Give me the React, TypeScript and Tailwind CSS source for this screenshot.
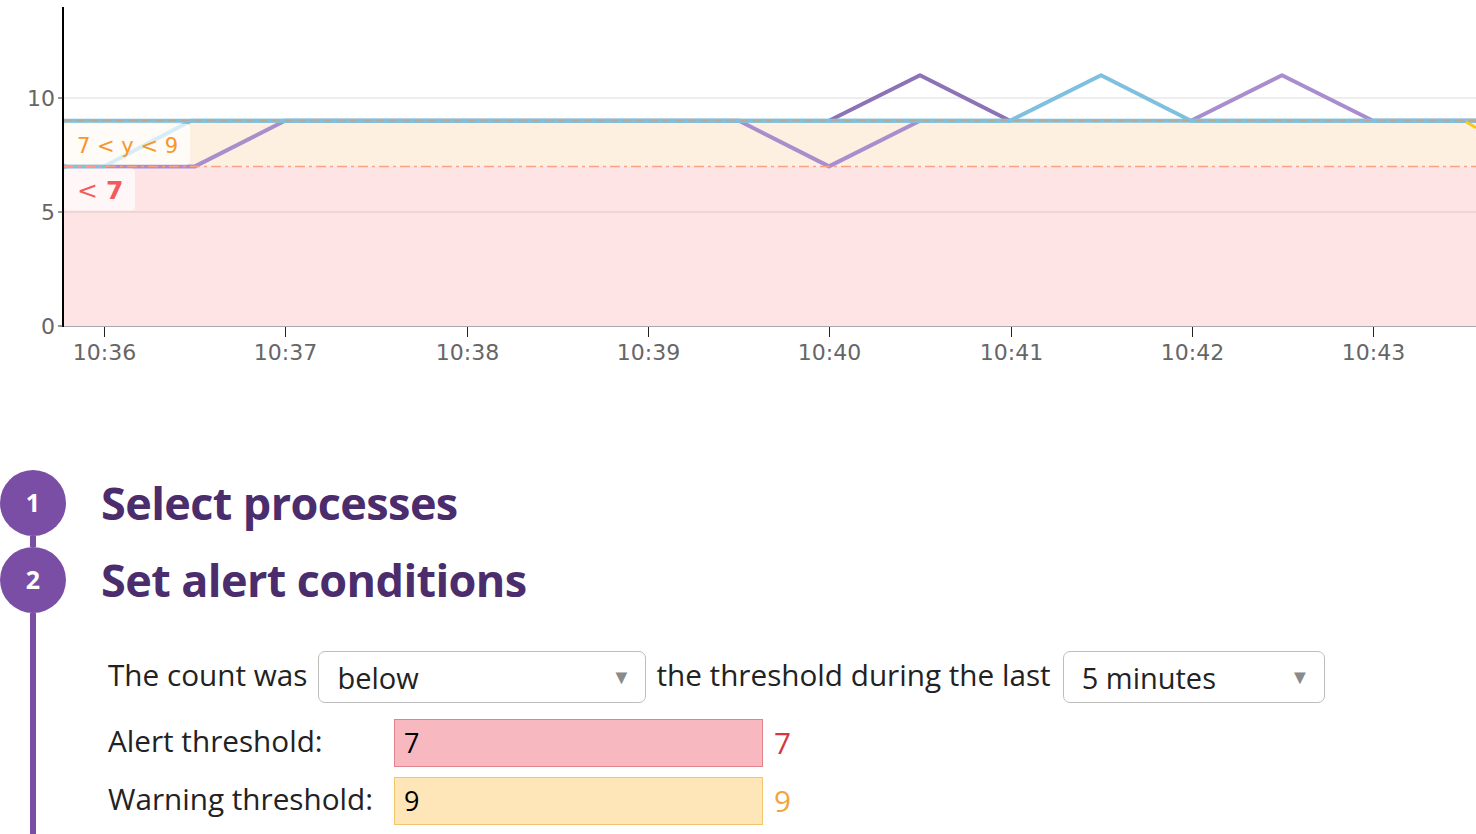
import React from 'react'

const PURPLE = '#7b4ea6'
const TICKS = ['10:36', '10:37', '10:38', '10:39', '10:40', '10:41', '10:42', '10:43']
const X0 = 104
const STEP = 181.3

// value -> pixel
const yv = (v: number) => 326 - v * 22.8

function Chart() {
  const y9 = yv(9)
  const y7 = yv(7)
  const y11 = yv(11)
  return (
    <svg width={1476} height={380} className="block" style={{ fontFamily: '"DejaVu Sans", Verdana, sans-serif' }}>
      {/* bands */}
      <rect x={64} y={y9} width={1412} height={y7 - y9} fill="#fef0e1" />
      <rect x={64} y={y7} width={1412} height={326 - y7} fill="#fee4e4" />

      {/* grid */}
      <line x1={64} x2={1476} y1={yv(10)} y2={yv(10)} stroke="#dcdcdc" strokeWidth={1} />
      <line x1={64} x2={1476} y1={yv(5)} y2={yv(5)} stroke="#d9c9c9" strokeWidth={1} />

      {/* series */}
      <polyline
        points={`64,${y7} 195,${y7} 285,${y9} 739,${y9} 829,${y7} 920,${y9}`}
        fill="none" stroke="#a98dcc" strokeWidth={4} strokeLinejoin="round" />
      <polyline
        points={`1191,${y9} 1282,${y11} 1373,${y9} 1476,${y9}`}
        fill="none" stroke="#a98dcc" strokeWidth={4} strokeLinejoin="round" />
      <polyline
        points={`829,${y9} 920,${y11} 1010,${y9}`}
        fill="none" stroke="#8d73b6" strokeWidth={4} strokeLinejoin="round" />
      <polyline
        points={`64,${y7} 104,${y7} 191,${y9} 1010,${y9} 1101,${y11} 1191,${y9} 1476,${y9}`}
        fill="none" stroke="#7ec0de" strokeWidth={4} strokeLinejoin="round" />
      <line x1={64} x2={1476} y1={y9} y2={y9} stroke="#7ec0de" strokeWidth={4} />
      <line x1={1466} y1={y9 + 1} x2={1476} y2={y9 + 7} stroke="#f8c81c" strokeWidth={3} />

      {/* threshold markers */}
      <line x1={64} x2={1476} y1={y9} y2={y9} stroke="#b7a993" strokeWidth={1.5} strokeDasharray="8 5" />
      <line x1={64} x2={1476} y1={y7} y2={y7} stroke="#f9a283" strokeWidth={1.5} strokeDasharray="10 4 3 4" />

      {/* labels */}
      <rect x={64} y={y9 + 3} width={126} height={41} rx={4} fill="#ffffff" fillOpacity={0.7} />
      <text x={77} y={y9 + 32} fontSize={21} fill="#f7962a">7 &lt; y &lt; 9</text>
      <rect x={64} y={y7 + 2} width={71} height={42} rx={4} fill="#ffffff" fillOpacity={0.7} />
      <text x={77} y={y7 + 33} fontSize={25} fill="#f25b5b">&lt; <tspan fontWeight={700}>7</tspan></text>

      {/* y axis */}
      <line x1={63} x2={63} y1={7} y2={327} stroke="#000" strokeWidth={2} />
      <line x1={58} x2={63} y1={yv(10)} y2={yv(10)} stroke="#333" strokeWidth={1} />
      <line x1={58} x2={63} y1={yv(5)} y2={yv(5)} stroke="#333" strokeWidth={1} />
      <line x1={58} x2={63} y1={326} y2={326} stroke="#333" strokeWidth={1} />
      <text x={55} y={yv(10) + 8} fontSize={22} fill="#666" textAnchor="end">10</text>
      <text x={55} y={yv(5) + 8} fontSize={22} fill="#666" textAnchor="end">5</text>
      <text x={55} y={334} fontSize={22} fill="#666" textAnchor="end">0</text>

      {/* x axis */}
      <line x1={64} x2={1476} y1={326.5} y2={326.5} stroke="#a8a8a8" strokeWidth={1} />
      {TICKS.map((t, i) => {
        const x = Math.round(X0 + i * STEP) + 0.5
        return (
          <g key={t}>
            <line x1={x} x2={x} y1={327} y2={337} stroke="#222" strokeWidth={1} />
            <text x={x} y={360} fontSize={22} fill="#666" textAnchor="middle">{t}</text>
          </g>
        )
      })}
    </svg>
  )
}

function StepDot({ n }: { n: number }) {
  return (
    <div className="w-[66px] h-[66px] shrink-0 rounded-full bg-[#7b4ea6] flex items-center justify-center text-white text-[25px] font-bold font-['Open_Sans',sans-serif]">
      {n}
    </div>
  )
}

function Dropdown({ value, width }: { value: string; width: string }) {
  return (
    <div className={`${width} h-[52px] shrink-0 bg-white border border-[#bdbdbd] rounded-[7px] flex items-center justify-between pl-[18px] pr-[14px]`}>
      <span className="text-[#222] text-[29px] leading-none pt-[1px]">{value}</span>
      <span className="text-[#8a8a8a] text-[20px] leading-none">▼</span>
    </div>
  )
}

export default function App() {
  return (
    <div className="w-[1476px] h-[834px] overflow-hidden bg-white">
      <Chart />

      <div className="mt-[90px]">
        <div className="flex">
          <div className="w-[66px] flex flex-col items-center">
            <StepDot n={1} />
            <div className="w-[6px] h-[11px]" style={{ background: PURPLE }} />
          </div>
          <h2 className="ml-[35px] h-[66px] flex items-center text-[#4b2c6d] text-[45px] font-bold tracking-[-0.6px] font-['Open_Sans',sans-serif]">
            Select processes
          </h2>
        </div>

        <div className="flex">
          <div className="w-[66px] flex flex-col items-center">
            <StepDot n={2} />
            <div className="w-[6px] flex-1" style={{ background: PURPLE }} />
          </div>
          <div className="ml-[35px]">
            <h2 className="h-[66px] flex items-center text-[#4b2c6d] text-[45px] font-bold tracking-[-0.6px] font-['Open_Sans',sans-serif]">
              Set alert conditions
            </h2>

            <div className="pl-[7px] pt-[38px] pb-[60px] text-[#222] text-[29.7px] font-['Open_Sans',sans-serif]">
              <div className="flex items-center">
                <span className="-mt-[4px]">The count was</span>
                <div className="ml-[11px]"><Dropdown value="below" width="w-[328px]" /></div>
                <span className="ml-[10px] -mt-[4px]">the threshold during the last</span>
                <div className="ml-[12px]"><Dropdown value="5 minutes" width="w-[262px]" /></div>
              </div>

              <div className="flex items-center mt-[16px]">
                <span className="w-[286px] -mt-[3px]">Alert threshold:</span>
                <div className="w-[369px] h-[48px] bg-[#f7b8c0] border border-[#e0838c] flex items-center px-[9px] text-black text-[27px]">7</div>
                <span className="ml-[11px] text-[#d9343f]">7</span>
              </div>

              <div className="flex items-center mt-[10px]">
                <span className="w-[286px] -mt-[3px]">Warning threshold:</span>
                <div className="w-[369px] h-[48px] bg-[#fee6b9] border border-[#f1c66f] flex items-center px-[9px] text-black text-[27px]">9</div>
                <span className="ml-[11px] text-[#f1a53c]">9</span>
              </div>
            </div>
          </div>
        </div>
      </div>
    </div>
  )
}
